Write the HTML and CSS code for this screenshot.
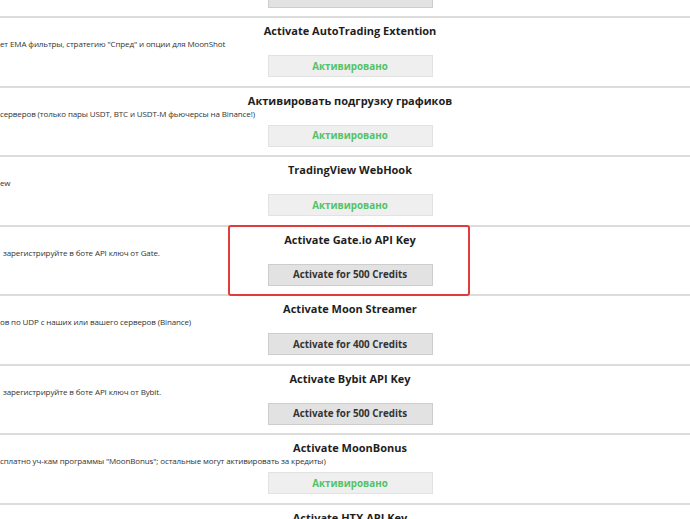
FILE: index.html
```html
<!DOCTYPE html>
<html lang="ru">
<head>
<meta charset="utf-8">
<title>Modules</title>
<link rel="stylesheet" href="styles.css">
</head>
<body>
<div class="list">
  <div class="row">
    <div class="title">&nbsp;</div>
    <div class="desc">&nbsp;</div>
    <button class="btn">Activate for 400 Credits</button>
  </div>
  <div class="row">
    <div class="title">Activate AutoTrading Extention</div>
    <div class="desc">ет EMA фильтры, стратегию "Спред" и опции для MoonShot</div>
    <button class="btn done">Активировано</button>
  </div>
  <div class="row">
    <div class="title">Активировать подгрузку графиков</div>
    <div class="desc">серверов (только пары USDT, BTC и USDT-M фьючерсы на Binance!)</div>
    <button class="btn done">Активировано</button>
  </div>
  <div class="row">
    <div class="title">TradingView WebHook</div>
    <div class="desc">ew</div>
    <button class="btn done">Активировано</button>
  </div>
  <div class="row highlighted">
    <div class="title">Activate Gate.io API Key</div>
    <div class="desc indent">зарегистрируйте в боте API ключ от Gate.</div>
    <button class="btn">Activate for 500 Credits</button>
    <div class="mark"></div>
  </div>
  <div class="row">
    <div class="title">Activate Moon Streamer</div>
    <div class="desc">ов по UDP с наших или вашего серверов (Binance)</div>
    <button class="btn">Activate for 400 Credits</button>
  </div>
  <div class="row">
    <div class="title">Activate Bybit API Key</div>
    <div class="desc indent">зарегистрируйте в боте API ключ от Bybit.</div>
    <button class="btn">Activate for 500 Credits</button>
  </div>
  <div class="row">
    <div class="title">Activate MoonBonus</div>
    <div class="desc">сплатно уч-кам программы "MoonBonus"; остальные могут активировать за кредиты)</div>
    <button class="btn done">Активировано</button>
  </div>
  <div class="row">
    <div class="title">Activate HTX API Key</div>
    <div class="desc">&nbsp;</div>
    <button class="btn">Activate for 500 Credits</button>
  </div>
</div>
</body>
</html>
```

FILE: styles.css
```css
html, body {
  margin: 0;
  padding: 0;
  background: #ffffff;
  overflow: hidden;
}
body {
  width: 690px;
  height: 519px;
  font-family: "Open Sans", "Noto Sans", sans-serif;
  color: #222222;
}
.list {
  margin-top: -51.5px;
  display: flex;
  flex-direction: column;
}
.row {
  position: relative;
  display: flex;
  flex-direction: column;
  align-items: center;
  padding: 5px 0 8.5px 10px;
  border-bottom: 2px solid #dcdcdc;
  height: 54px;
}
.title {
  font-size: 11px;
  font-weight: 700;
  line-height: 15px;
  height: 15px;
  color: #1e1e1e;
  white-space: nowrap;
}
.desc {
  align-self: stretch;
  margin-left: -10px;
  font-size: 8px;
  letter-spacing: -0.12px;
  line-height: 12px;
  height: 12px;
  color: #333333;
  white-space: nowrap;
}
.desc.indent {
  padding-left: 3px;
}
.btn {
  margin-top: 5px;
  width: 165px;
  height: 22px;
  padding: 0;
  background: #e2e2e2;
  border: 1px solid #cdcdcd;
  border-radius: 0;
  font-family: "Open Sans", "Noto Sans", sans-serif;
  font-size: 9.8px;
  font-weight: 700;
  color: #333333;
}
.btn.done {
  background: #efefef;
  border-color: #e2e2e2;
  color: #55c266;
}
.mark {
  position: absolute;
  left: 228px;
  top: -2px;
  width: 238px;
  height: 67px;
  border: 2px solid #e23b3b;
  border-radius: 3px;
  pointer-events: none;
}
```
